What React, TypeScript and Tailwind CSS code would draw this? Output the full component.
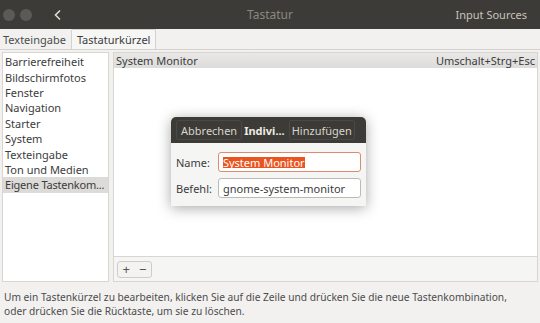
const categories = [
  'Barrierefreiheit',
  'Bildschirmfotos',
  'Fenster',
  'Navigation',
  'Starter',
  'System',
  'Texteingabe',
  'Ton und Medien',
  'Eigene Tastenkom...',
];

function HeaderBar() {
  return (
    <div className="flex h-[29px] items-center bg-[#3c3b37] px-[3px]">
      <div className="flex w-[100px] items-center">
        <span className="size-[12px] rounded-full bg-[#5b5a56]" />
        <span className="ml-[5px] size-[12px] rounded-full bg-[#5b5a56]" />
        <svg className="ml-[21px]" width="10" height="12" viewBox="0 0 10 12" fill="none" aria-hidden="true">
          <path d="M7 1.5L2.5 6L7 10.5" stroke="#dfdbd2" strokeWidth="1.6" />
        </svg>
      </div>
      <div className="flex-1 text-center text-[12px] text-[#8b8880]">Tastatur</div>
      <div className="w-[100px] pr-[10px] text-right text-[11px] text-[#c8c4bb]">Input Sources</div>
    </div>
  );
}

function Tabs() {
  return (
    <div className="flex h-[21px] items-end border-b border-[#d4d2cf] bg-[#f2f1f0] pl-[1px]">
      <div className="flex h-[20px] items-center px-[2px] text-[#4c4c4c]">Texteingabe</div>
      <div className="ml-[3px] flex h-[20px] items-center rounded-t-[2px] border border-b-0 border-[#d4d2cf] bg-[#f6f6f5] px-[5px] text-[#3c3c3c]">
        Tastaturkürzel
      </div>
    </div>
  );
}

function Dialog() {
  return (
    <div className="absolute left-[171px] top-[117px] w-[195px] overflow-hidden rounded-t-[5px] bg-[#f5f5f4] shadow-[0_2px_14px_rgba(0,0,0,0.35)]">
      <div className="flex h-[26px] items-center bg-[#3c3b37] px-[5px] text-[#d9d5cc]">
        <div className="flex h-[20px] items-center rounded-[2px] border border-[#4a4945] px-[4px]">Abbrechen</div>
        <div className="ml-[2px] font-bold text-[#efebe3]">Indivi...</div>
        <div className="ml-[4px] flex h-[20px] items-center rounded-[2px] border border-[#4a4945] px-[2px]">Hinzufügen</div>
      </div>
      <div className="grid grid-cols-[auto_1fr] items-center gap-x-[6px] gap-y-[6px] px-[5px] pb-[8px] pt-[9px] text-[#3c3c3c]">
        <span>Name:</span>
        <div className="flex h-[20px] items-center rounded-[3px] border border-[#e08a6d] bg-white px-[4px]">
          <span className="bg-[#e95420] text-white">System Monitor</span>
        </div>
        <span>Befehl:</span>
        <div className="flex h-[20px] items-center rounded-[3px] border border-[#bcbab6] bg-white px-[4px]">
          gnome-system-monitor
        </div>
      </div>
    </div>
  );
}

export default function App() {
  return (
    <div
      className="relative h-[323px] w-[540px] overflow-hidden bg-[#f2f1f0] text-[11px] leading-none text-[#3c3c3c]"
      style={{ fontFamily: '"Noto Sans", "DejaVu Sans", sans-serif' }}
    >
      <HeaderBar />
      <Tabs />
      <div className="flex h-[232px] gap-[4px] px-[2px] pt-[2px]">
        <div className="w-[107px] overflow-hidden border border-[#d8d6d3] bg-white pt-[1px]">
          {categories.map((c, i) => (
            <div
              key={c}
              className={`flex h-[15.4px] items-center whitespace-nowrap px-[2px] ${i === categories.length - 1 ? 'bg-[#dcdbd8] tracking-[-0.2px]' : ''}`}
            >
              {c}
            </div>
          ))}
        </div>
        <div className="flex flex-1 flex-col border border-[#d8d6d3] bg-white">
          <div className="flex h-[15px] items-center justify-between bg-gradient-to-b from-[#e9e8e6] to-[#dddcda] px-[2px]">
            <span>System Monitor</span>
            <span>Umschalt+Strg+Esc</span>
          </div>
          <div className="flex-1" />
          <div className="flex h-[25px] items-center border-t border-[#d8d6d3] bg-[#f5f5f4] px-[3px]">
            <div className="flex h-[17px] w-[35px] items-center justify-around rounded-[3px] border border-[#cfcdca] bg-[#f4f3f2] text-[13px] text-[#555]">
              <span>+</span>
              <span>−</span>
            </div>
          </div>
        </div>
      </div>
      <p className="mt-[8px] whitespace-nowrap px-[4px] text-[10.2px] leading-[14px] text-[#4c4c4c]">
        Um ein Tastenkürzel zu bearbeiten, klicken Sie auf die Zeile und drücken Sie die neue Tastenkombination,
        <br />
        oder drücken Sie die Rücktaste, um sie zu löschen.
      </p>
      <Dialog />
    </div>
  );
}
